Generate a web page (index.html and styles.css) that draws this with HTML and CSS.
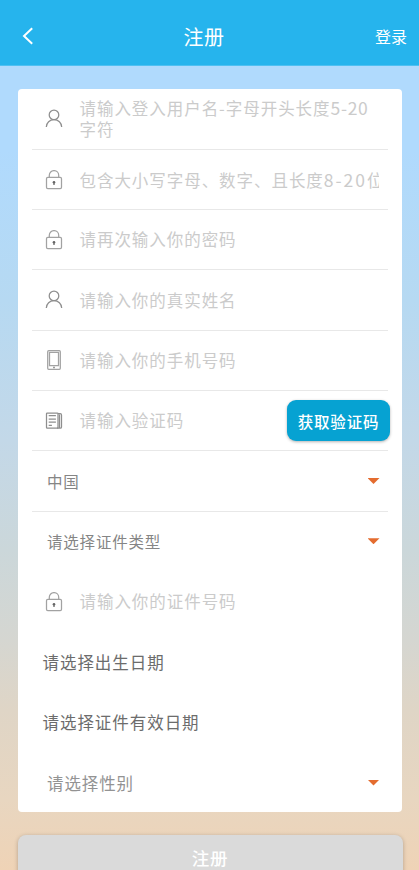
FILE: index.html
```html
<!DOCTYPE html>
<html lang="zh-CN">
<head>
<meta charset="utf-8">
<meta name="viewport" content="width=device-width, initial-scale=1">
<title>注册</title>
<link rel="stylesheet" href="styles.css">
</head>
<body>
<svg class="defs" aria-hidden="true">
  <symbol id="user" viewBox="0 0 18 20"><circle cx="9" cy="5.900" r="4.800"/><path d="M1.300 18c.2-4.200 3.400-7.300 7.700-7.300s7.500 3.100 7.700 7.300"/></symbol>
  <symbol id="lock" viewBox="0 0 18 20"><rect x="1.500" y="7.400" width="15" height="11.200" rx="1.300"/><path d="M4.300 7.400V5.300a4.700 4.700 0 0 1 9.400 0v2.100"/><circle class="dot" cx="9" cy="12.200" r="1.300"/><path class="keyhole" d="M9 12.200v2.800"/></symbol>
  <symbol id="phone" viewBox="0 0 18 20"><rect x="2.700" y=".7" width="12.600" height="18.600" rx="1"/><path d="M4.500 2.300h9v13.200h-9z"/><path class="keyhole" d="M9 16.700v1.500"/></symbol>
  <symbol id="news" viewBox="0 0 18 20"><rect x="1.500" y="2" width="11.500" height="15.200" rx=".7"/><path d="M13 2.600h2.200q1.300 0 1.300 1.300v12q0 1.300-1.300 1.300H12M14.500 3.500v13.500M3.700 4.700h7.200M3.700 8h7.200M3.700 11.200h7.200M3.700 14.400h3.200"/></symbol>
</svg>
<header class="bar">
  <svg class="back" viewBox="0 0 12 18"><path d="M10.200 1.200 2 9l8.200 7.800"/></svg>
  <h1 class="title">注册</h1>
  <a class="login">登录</a>
</header>
<main class="page">
  <form class="card">
    <div class="row line"><svg class="icon"><use href="#user"/></svg><span class="hint wrap">请输入登入用户名-字母开头长度<span class="digits">5-20</span>字符</span></div>
    <div class="row line"><svg class="icon pale"><use href="#lock"/></svg><span class="hint clip">包含大小写字母、数字、且长度<span class="digits wide">8-20</span>位</span></div>
    <div class="row line"><svg class="icon pale"><use href="#lock"/></svg><span class="hint">请再次输入你的密码</span></div>
    <div class="row line"><svg class="icon"><use href="#user"/></svg><span class="hint">请输入你的真实姓名</span></div>
    <div class="row line"><svg class="icon pale"><use href="#phone"/></svg><span class="hint">请输入你的手机号码</span></div>
    <div class="row line"><svg class="icon"><use href="#news"/></svg><span class="hint">请输入验证码</span><button type="button" class="code">获取验证码</button></div>
    <div class="row line select"><span>中国</span><i class="arrow"></i></div>
    <div class="row select"><span>请选择证件类型</span><i class="arrow"></i></div>
    <div class="row"><svg class="icon pale"><use href="#lock"/></svg><span class="hint">请输入你的证件号码</span></div>
    <div class="row date">请选择出生日期</div>
    <div class="row date">请选择证件有效日期</div>
    <div class="row select gender"><span>请选择性别</span><i class="arrow"></i></div>
  </form>
  <button type="button" class="submit">注册</button>
</main>
</body>
</html>
```
FILE: styles.css
```css
* { box-sizing: border-box; }
body {
  margin: 0;
  height: 870px;
  overflow: hidden;
  font-family: "Noto Sans CJK SC", sans-serif;
  background: linear-gradient(#b0dafd 150px, #b6d9f2 300px, #c3d8e8 440px, #cbd7da 550px, #d5d6d1 640px, #dfd5c6 710px, #e8d6c0 800px, #efd3b6 870px);
}
.defs { position: absolute; width: 0; height: 0; }
.bar {
  display: grid;
  grid-template-columns: 80px 1fr 80px;
  align-items: center;
  height: 66px;
  padding: 7px 12px 0 22px;
  color: #fff;
  background: #26b4ed;
  border-bottom: 1px solid #4fc0f2;
}
.back { width: 12px; height: 18px; fill: none; stroke: #fff; stroke-width: 2; }
.title { margin: 0; padding-right: 21px; text-align: center; font-size: 20px; font-weight: 400; letter-spacing: .5px; }
.login { text-align: right; font-size: 16px; }
.page { padding: 23px 17px 0 18px; }
.card {
  width: 384px;
  height: 722.500px;
  padding: .6px 14px 0;
  background: #fff;
  border-radius: 4px;
}
.row {
  display: flex;
  align-items: center;
  height: 60.300px;
  padding: 0 9px 0 13px;
  border-bottom: 1px solid transparent;
}
.line { border-bottom-color: #e8e8e8; }
.icon { flex: none; width: 18px; height: 20px; margin-right: 16.500px; fill: none; stroke: #8e8e8e; stroke-width: 1.250; }
.pale { stroke: #a2a2a2; }
.keyhole { stroke: #666; stroke-width: 1.300; }
.dot { fill: #666; stroke: none; }
.hint {
  flex: 1;
  min-width: 0;
  white-space: nowrap;
  font-size: 16.500px;
  line-height: 21px;
  letter-spacing: .95px;
  color: #cbcbcb;
}
.clip { overflow: hidden; line-height: 26px; }
.wrap { white-space: normal; word-break: break-all; }
.digits { font-size: 17.500px; line-height: 1; letter-spacing: .7px; }
.wide { letter-spacing: 2px; }
.code {
  flex: none;
  width: 103px;
  height: 41px;
  margin-right: -11px;
  padding: 0;
  border: 0;
  border-radius: 9px;
  background: #06a2d2;
  box-shadow: 0 1px 3px rgba(0, 0, 0, .3);
  color: #fff;
  font: 500 15.500px "Noto Sans CJK SC", sans-serif;
  letter-spacing: .8px;
}
.select {
  justify-content: space-between;
  padding: 0 8.500px 0 15px;
  color: #858585;
  font-size: 15.500px;
  letter-spacing: .8px;
}
.gender { font-size: 16.500px; letter-spacing: .9px; color: #939393; }
.arrow { width: 12px; height: 6px; background: #e46c2f; clip-path: polygon(0 0, 100% 0, 50% 100%); }
.date { padding-left: 10.500px; color: #6c6c6c; font-size: 16.500px; letter-spacing: .95px; }
.submit {
  display: block;
  width: 385px;
  height: 48px;
  margin: 23.500px 0 0 -.500px;
  padding: 0 0 3px;
  border: 0;
  border-radius: 8px;
  background: #dadada;
  box-shadow: 0 1px 4px rgba(0, 0, 0, .25);
  color: #fff;
  font: 500 17.500px "Noto Sans CJK SC", sans-serif;
  letter-spacing: .8px;
}
```
